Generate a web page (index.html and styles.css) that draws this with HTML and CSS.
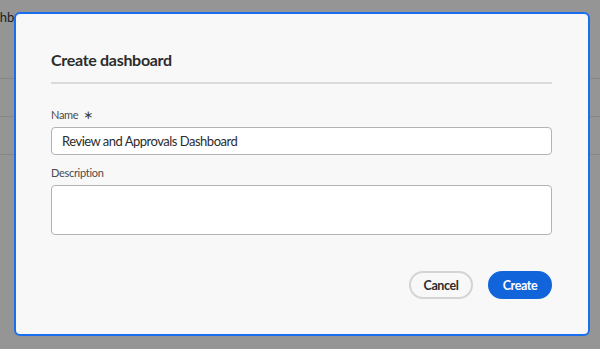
FILE: index.html
```html
<!DOCTYPE html>
<html>
<head>
<meta charset="utf-8">
<link rel="stylesheet" href="styles.css">
</head>
<body>
<div class="page">
  <div class="page-head"><span class="page-title">Dashboards</span></div>
  <div class="page-row"></div>
  <div class="page-row"></div>
</div>
<div class="modal">
  <h2 class="modal-title">Create dashboard</h2>
  <div class="divider"></div>
  <div class="field">
    <label class="label">Name <span class="req">∗</span></label>
    <div class="input">Review and Approvals Dashboard</div>
  </div>
  <div class="field">
    <label class="label">Description</label>
    <div class="textarea"></div>
  </div>
  <div class="actions">
    <button class="btn btn-secondary">Cancel</button>
    <button class="btn btn-primary">Create</button>
  </div>
</div>
</body>
</html>
```
FILE: styles.css
```css
html, body {
  margin: 0;
  padding: 0;
  width: 600px;
  height: 349px;
  overflow: hidden;
  background: #959595;
  font-family: Lato, "Open Sans", sans-serif;
}
.page {
  display: flex;
  flex-direction: column;
}
.page-head {
  height: 79px;
  border-bottom: 1px solid #868686;
  padding-top: 6px;
  box-sizing: border-box;
}
.page-title {
  display: inline-block;
  margin-left: -22px;
  font-size: 13px;
  color: #1e1e1e;
}
.page-row {
  height: 37px;
  border-bottom: 1px solid #868686;
}
.modal {
  position: absolute;
  left: 14px;
  top: 12px;
  width: 576px;
  height: 324px;
  box-sizing: border-box;
  border: 2px solid #1a6ff0;
  border-radius: 6px;
  background: #f8f8f8;
  padding: 36px 36px 0 35px;
  display: flex;
  flex-direction: column;
}
.modal-title {
  margin: 0;
  font-size: 16px;
  font-weight: 700;
  line-height: 20px;
  letter-spacing: -0.3px;
  color: #2c2c2c;
}
.divider {
  height: 2px;
  background: #dadada;
  margin-top: 12px;
  margin-bottom: 23px;
}
.field {
  display: flex;
  flex-direction: column;
  margin-bottom: 10px;
}
.label {
  font-size: 11px;
  line-height: 16px;
  letter-spacing: -0.3px;
  color: #4b4b4b;
  margin-bottom: 4px;
}
.req {
  font-family: "DejaVu Sans", sans-serif;
  font-size: 12px;
  margin-left: 2px;
  color: #3a3a3a;
}
.input {
  height: 28px;
  box-sizing: border-box;
  border: 1px solid #b3b3b3;
  border-radius: 4px;
  background: #ffffff;
  padding: 0 10px;
  font-size: 13px;
  letter-spacing: -0.5px;
  line-height: 26px;
  color: #2c2c2c;
}
.textarea {
  height: 50px;
  box-sizing: border-box;
  border: 1px solid #b3b3b3;
  border-radius: 4px;
  background: #ffffff;
}
.actions {
  display: flex;
  justify-content: flex-end;
  gap: 15px;
  margin-top: 26px;
}
.btn {
  height: 28px;
  width: 64px;
  box-sizing: border-box;
  border-radius: 14px;
  font-family: inherit;
  font-size: 12.5px;
  font-weight: 700;
  letter-spacing: -0.4px;
  padding: 0;
  cursor: pointer;
}
.btn-secondary {
  background: #f8f8f8;
  border: 2px solid #d4d4d4;
  color: #2c2c2c;
}
.btn-primary {
  background: #1264da;
  border: 2px solid #1264da;
  color: #ffffff;
}
```
